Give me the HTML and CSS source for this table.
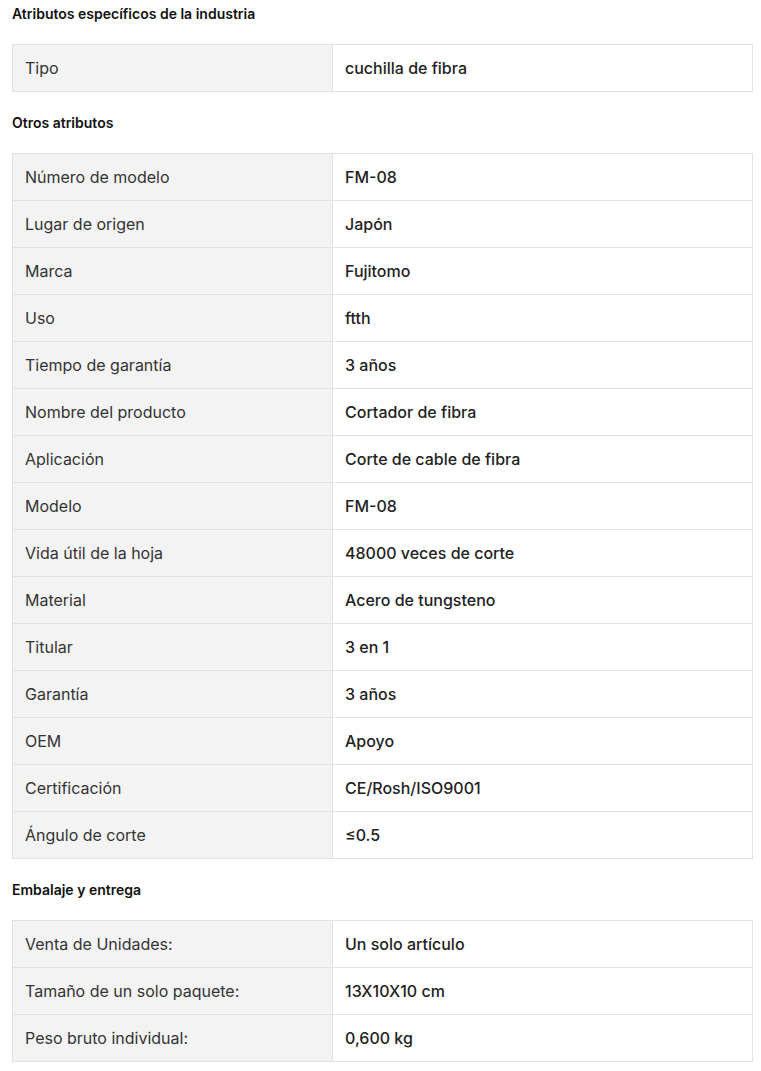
FILE: index.html
```html
<!DOCTYPE html>
<html lang="es">
<head>
<meta charset="utf-8">
<link rel="stylesheet" href="styles.css">
</head>
<body>
<div class="page">
  <section class="group">
    <h3 class="group-title">Atributos específicos de la industria</h3>
    <table class="attrs">
      <tr><td class="k">Tipo</td><td class="v">cuchilla de fibra</td></tr>
    </table>
  </section>
  <section class="group">
    <h3 class="group-title">Otros atributos</h3>
    <table class="attrs">
      <tr><td class="k">Número de modelo</td><td class="v">FM-08</td></tr>
      <tr><td class="k">Lugar de origen</td><td class="v">Japón</td></tr>
      <tr><td class="k">Marca</td><td class="v">Fujitomo</td></tr>
      <tr><td class="k">Uso</td><td class="v">ftth</td></tr>
      <tr><td class="k">Tiempo de garantía</td><td class="v">3 años</td></tr>
      <tr><td class="k">Nombre del producto</td><td class="v">Cortador de fibra</td></tr>
      <tr><td class="k">Aplicación</td><td class="v">Corte de cable de fibra</td></tr>
      <tr><td class="k">Modelo</td><td class="v">FM-08</td></tr>
      <tr><td class="k">Vida útil de la hoja</td><td class="v">48000 veces de corte</td></tr>
      <tr><td class="k">Material</td><td class="v">Acero de tungsteno</td></tr>
      <tr><td class="k">Titular</td><td class="v">3 en 1</td></tr>
      <tr><td class="k">Garantía</td><td class="v">3 años</td></tr>
      <tr><td class="k">OEM</td><td class="v">Apoyo</td></tr>
      <tr><td class="k">Certificación</td><td class="v">CE/Rosh/ISO9001</td></tr>
      <tr><td class="k">Ángulo de corte</td><td class="v">≤0.5</td></tr>
    </table>
  </section>
  <section class="group">
    <h3 class="group-title">Embalaje y entrega</h3>
    <table class="attrs">
      <tr><td class="k">Venta de Unidades:</td><td class="v">Un solo artículo</td></tr>
      <tr><td class="k">Tamaño de un solo paquete:</td><td class="v">13X10X10 cm</td></tr>
      <tr><td class="k">Peso bruto individual:</td><td class="v">0,600 kg</td></tr>
    </table>
  </section>
</div>
</body>
</html>
```
FILE: styles.css
```css
html, body {
  margin: 0;
  padding: 0;
  background: #fff;
}
body {
  font-family: Inter, "Noto Sans", "Liberation Sans", sans-serif;
  color: #222;
}
.page {
  padding: 4px 8px 0 12px;
  display: flex;
  flex-direction: column;
  gap: 21px;
}
.group-title {
  margin: 0 0 20px;
  font-size: 14px;
  line-height: 20px;
  font-weight: 600;
  color: #111;
}
.attrs {
  width: 741px;
  border-collapse: collapse;
  table-layout: fixed;
  font-size: 16px;
}
.attrs td {
  height: 47px;
  padding: 0 12px;
  border: 1px solid #e2e2e2;
  box-sizing: border-box;
  vertical-align: middle;
  line-height: 20px;
}
.attrs .k {
  width: 320px;
  background: #f3f3f3;
  color: #333;
}
.attrs .v {
  background: #fff;
  color: #222;
  font-weight: 500;
}
```
